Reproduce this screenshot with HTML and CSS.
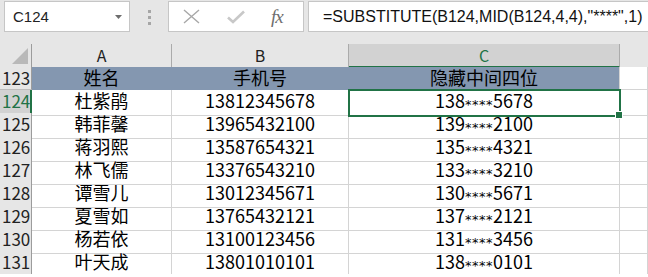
FILE: index.html
```html
<!DOCTYPE html>
<html lang="zh-CN">
<head>
    <meta charset="UTF-8">
    <meta name="viewport" content="width=device-width, initial-scale=1.0">
    <title>隐藏中间四位</title>
    <link rel="stylesheet" href="styles.css">
</head>
<body>
    <div class="toolbar">
        <div class="namebox">
            <span>C124</span>
            <svg class="arrow" width="7" height="4" viewBox="0 0 7 4"><path d="M0 0H7L3.5 4Z" fill="#6d6d6d"/></svg>
        </div>
        <div class="grip"><i></i><i></i><i></i></div>
        <div class="fxbox">
            <svg width="17" height="15" viewBox="0 0 17 15"><path d="M1 1L16 14M16 1L1 14" stroke="#a8a8a8" stroke-width="1.4" fill="none"/></svg>
            <svg width="18" height="14" viewBox="0 0 18 14"><path d="M1 7.5L6 12L17 1.5" stroke="#c8c8c8" stroke-width="2.6" fill="none"/></svg>
            <span class="fx">fx</span>
        </div>
        <div class="formula">=SUBSTITUTE(B124,MID(B124,4,4),"****",1)</div>
    </div>

    <div class="sheet">
        <div class="row colhead">
            <div class="corner"><svg width="16" height="16" viewBox="0 0 16 16"><path d="M16 0V16H0Z" fill="#b9b9b9"/></svg></div>
            <div class="ch">A</div>
            <div class="ch">B</div>
            <div class="ch active">C</div>
            <div class="ch last"></div>
        </div>
        <div class="row title">
            <div class="rh">123</div>
            <div class="c">姓名</div>
            <div class="c">手机号</div>
            <div class="c">隐藏中间四位</div>
            <div class="c blank"></div>
        </div>
        <div id="rows"></div>
    </div>

    <script>
        const people = [
            ['杜紫鹃', '13812345678'],
            ['韩菲馨', '13965432100'],
            ['蒋羽熙', '13587654321'],
            ['林飞儒', '13376543210'],
            ['谭雪儿', '13012345671'],
            ['夏雪如', '13765432121'],
            ['杨若依', '13100123456'],
            ['叶天成', '13801010101']
        ];
        const rows = document.getElementById('rows');
        people.forEach((p, i) => {
            const num = 124 + i;
            const sel = i === 0 ? ' active' : '';
            const masked = p[1].slice(0, 3) + '<span class="mask">****</span>' + p[1].slice(7);
            rows.innerHTML += `
                <div class="row">
                    <div class="rh${sel}">${num}</div>
                    <div class="c">${p[0]}</div>
                    <div class="c">${p[1]}</div>
                    <div class="c${sel}">${masked}</div>
                    <div class="c"></div>
                </div>`;
        });
    </script>
</body>
</html>
```

FILE: styles.css
```css
body {
    margin: 0;
    background: #ffffff;
    overflow: hidden;
    font-family: "Noto Sans CJK SC", sans-serif;
}
.toolbar {
    display: flex;
    align-items: flex-start;
    height: 44px;
    padding-top: 1px;
    box-sizing: border-box;
    background: #e6e6e6;
}
.namebox {
    display: flex;
    align-items: center;
    justify-content: space-between;
    width: 126px;
    height: 31px;
    margin-left: 4px;
    padding: 0 7px 0 8px;
    box-sizing: border-box;
    background: white;
    border: 1px solid #c6c6c6;
    font-family: "Liberation Sans", sans-serif;
    font-size: 15px;
    color: #222;
}
.arrow {
    margin-top: 1px;
}
.grip {
    display: flex;
    flex-direction: column;
    gap: 3px;
    width: 38px;
    padding-top: 9px;
    align-items: center;
}
.grip i {
    width: 3px;
    height: 3px;
    background: #a6a6a6;
}
.fxbox {
    display: flex;
    align-items: center;
    width: 136px;
    height: 31px;
    padding-left: 14px;
    gap: 28px;
    box-sizing: border-box;
    background: white;
    border: 1px solid #c6c6c6;
}
.fxbox svg:nth-child(2) {
    margin-left: -1px;
}
.fx {
    margin-left: -2px;
    font-family: "Liberation Serif", serif;
    font-style: italic;
    font-size: 19px;
    color: #6e6e6e;
    letter-spacing: -1px;
}
.formula {
    flex: 1;
    height: 31px;
    margin-left: 4px;
    margin-right: -2px;
    padding-left: 14px;
    box-sizing: border-box;
    background: white;
    border: 1px solid #c6c6c6;
    font-family: "Liberation Sans", sans-serif;
    font-size: 16px;
    line-height: 29px;
    color: #111;
    white-space: nowrap;
}
.row {
    display: grid;
    grid-template-columns: 32px 140px 177px 271px 28px;
    height: 23px;
}
.row > div {
    box-sizing: border-box;
    border-right: 1px solid #d4d4d4;
    border-bottom: 1px solid #d4d4d4;
}
.c {
    text-align: center;
    font-size: 18px;
    line-height: 21px;
    color: #000;
    white-space: nowrap;
}
.mask {
    font-family: "DejaVu Sans", sans-serif;
    font-size: 13px;
    vertical-align: -1px;
    letter-spacing: 0.5px;
}
.rh {
    background: #e6e6e6;
    padding-left: 2px;
    font-size: 17px;
    line-height: 22px;
    color: #222;
    border-right-color: #9c9c9c !important;
    border-bottom-color: #bcbcbc !important;
}
.rh.active {
    background: #d2d2d2;
    color: #217346;
    border-right: 2px solid #217346 !important;
}
.colhead > div {
    background: #e6e6e6;
    border-right-color: #ababab;
    border-bottom-color: #9c9c9c;
}
.corner {
    display: flex;
    align-items: flex-end;
    justify-content: flex-end;
    padding: 0 3px 3px 0;
    border-right-color: #9c9c9c !important;
}
.ch {
    text-align: center;
    font-size: 16px;
    line-height: 23px;
    color: #222;
}
.ch.active {
    background: #d2d2d2 !important;
    color: #217346;
    border-bottom: 2px solid #217346 !important;
    line-height: 22px;
}
.ch.last {
    border-right: none;
}
.title .c {
    background: #8497b0;
    border-right-color: #8497b0;
    border-bottom-color: #8497b0;
}
.title .c:nth-child(4) {
    border-right-color: #d4d4d4;
}
.title .c.blank {
    background: white;
    border-right-color: #d4d4d4;
    border-bottom-color: #d4d4d4;
}
.c.active {
    position: relative;
    outline: 2px solid #217346;
    outline-offset: -1px;
    z-index: 1;
}
.c.active::after {
    content: "";
    position: absolute;
    right: -4px;
    bottom: -4px;
    width: 6px;
    height: 6px;
    background: #217346;
    border: 1px solid white;
}
```
